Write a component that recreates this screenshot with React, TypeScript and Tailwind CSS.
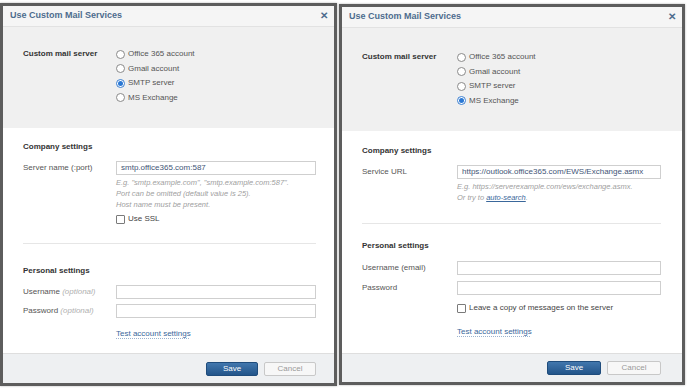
import React from "react";

const font = { fontFamily: '"Liberation Sans", Arial, sans-serif' };

function Radio({ label, checked }: { label: string; checked?: boolean }) {
  return (
    <div className="flex h-[14.5px] items-center">
      <span
        className={`flex h-[9px] w-[9px] items-center justify-center rounded-full border bg-white ${
          checked ? "border-[#3b7fd0]" : "border-[#8a8a8a]"
        }`}
      >
        {checked && <span className="h-[5px] w-[5px] rounded-full bg-[#2a78d4]" />}
      </span>
      <span className="ml-[3px] text-[8px] text-[#555]">{label}</span>
    </div>
  );
}

function Checkbox({ label }: { label: string }) {
  return (
    <div className="flex h-[12px] items-center">
      <span className="h-[9px] w-[9px] rounded-[1px] border border-[#7a7a7a] bg-white" />
      <span className="ml-[3px] text-[8px] text-[#444]">{label}</span>
    </div>
  );
}

function Input({ value }: { value?: string }) {
  return (
    <div className="flex h-[14px] flex-1 items-center border border-[#cfcfcf] bg-white px-[4px] text-[8px] text-[#3f5576]">
      {value}
    </div>
  );
}

function TitleBar() {
  return (
    <div className="flex h-[21px] items-center justify-between border-b border-[#e2e2e2] bg-[#f5f5f5] pl-[7px] pr-[6px]">
      <span className="text-[9px] font-bold text-[#4d6c8e]">Use Custom Mail Services</span>
      <span className="text-[10px] font-bold leading-none text-[#4d6c8e]">✕</span>
    </div>
  );
}

function ServerChoice({ selected, labelWidth, pt, height }: { selected: number; labelWidth: string; pt: string; height: string }) {
  const options = ["Office 365 account", "Gmail account", "SMTP server", "MS Exchange"];
  return (
    <div className={`flex bg-[#f0f0f0] pl-[20px] ${pt} ${height}`}>
      <div className={`${labelWidth} h-[14.5px] flex items-center text-[8px] font-bold text-[#333]`}>
        Custom mail server
      </div>
      <div className="flex flex-col">
        {options.map((o, i) => (
          <Radio key={o} label={o} checked={i === selected} />
        ))}
      </div>
    </div>
  );
}

function Footer({ pr, height, saveW }: { pr: string; height: string; saveW: string }) {
  return (
    <div className={`flex items-center justify-end gap-[6px] border-t border-[#dedede] bg-[#eef0f2] ${pr} ${height}`}>
      <button
        className={`flex h-[14px] ${saveW} items-center justify-center rounded-[2px] border border-[#1f4c7c] bg-gradient-to-b from-[#4277ad] to-[#23558a] text-[8px] text-white`}
      >
        Save
      </button>
      <button
        className={`flex h-[14px] ${saveW} items-center justify-center rounded-[2px] border border-[#c8c8c8] bg-[#f7f7f7] text-[8px] text-[#9a9a9a]`}
      >
        Cancel
      </button>
    </div>
  );
}

const linkCls = "text-[8px] text-[#3a679b] underline decoration-dotted decoration-[#9bb3cf] underline-offset-2";

function SmtpDialog() {
  return (
    <div className="mt-[3px] flex h-[383px] w-[337px] flex-col border-[3px] border-[#5d5d5d] bg-white shadow-[0_0_2px_rgba(0,0,0,0.3)]">
      <TitleBar />
      <ServerChoice selected={2} labelWidth="w-[93px]" pt="pt-[20px]" height="h-[101px]" />
      <div className="flex h-[225px] flex-col pl-[20px] pr-[18px] pt-[13px]">
        <div className="h-[12px] text-[8px] font-bold leading-[12px] text-[#333]">Company settings</div>
        <div className="mt-[8px] flex items-center">
          <div className="w-[93px] text-[8px] text-[#555]">Server name (:port)</div>
          <Input value="smtp.office365.com:587" />
        </div>
        <div className="ml-[93px] mt-[2px] text-[7.5px] italic leading-[11px] text-[#a0a0a0]">
          <div>E.g. "smtp.example.com", "smtp.example.com:587".</div>
          <div>Port can be omitted (default value is 25).</div>
          <div>Host name must be present.</div>
        </div>
        <div className="ml-[93px] mt-[3px]">
          <Checkbox label="Use SSL" />
        </div>
        <div className="mt-[18px] h-px bg-[#e6e6e6]" />
        <div className="mt-[21px] h-[12px] text-[8px] font-bold leading-[12px] text-[#333]">Personal settings</div>
        <div className="mt-[8px] flex items-center">
          <div className="w-[93px] text-[8px] text-[#555]">
            Username <span className="italic text-[#b0b0b0]">(optional)</span>
          </div>
          <Input />
        </div>
        <div className="mt-[5px] flex items-center">
          <div className="w-[93px] text-[8px] text-[#555]">
            Password <span className="italic text-[#b0b0b0]">(optional)</span>
          </div>
          <Input />
        </div>
        <div className="ml-[93px] mt-[7px] h-[12px] leading-[12px]">
          <span className={linkCls}>Test account settings</span>
        </div>
      </div>
      <Footer pr="pr-[18px]" height="h-[30px]" saveW="w-[52px]" />
    </div>
  );
}

function ExchangeDialog() {
  return (
    <div className="ml-[2px] mt-[4px] flex h-[381px] w-[346px] flex-col border-[3px] border-[#5d5d5d] bg-white shadow-[0_0_2px_rgba(0,0,0,0.3)]">
      <TitleBar />
      <ServerChoice selected={3} labelWidth="w-[95px]" pt="pt-[22px]" height="h-[103px]" />
      <div className="flex h-[222px] flex-col pl-[20px] pr-[21px] pt-[14px]">
        <div className="h-[12px] text-[8px] font-bold leading-[12px] text-[#333]">Company settings</div>
        <div className="mt-[8px] flex items-center">
          <div className="w-[95px] text-[8px] text-[#555]">Service URL</div>
          <Input value="https://outlook.office365.com/EWS/Exchange.asmx" />
        </div>
        <div className="ml-[95px] mt-[2px] text-[7.5px] italic leading-[11px] text-[#a0a0a0]">
          <div>E.g. https://serverexample.com/ews/exchange.asmx.</div>
          <div>
            Or try to <span className="text-[#3a679b] underline">auto-search</span>.
          </div>
        </div>
        <div className="mt-[20px] h-px bg-[#e6e6e6]" />
        <div className="mt-[16px] h-[12px] text-[8px] font-bold leading-[12px] text-[#333]">Personal settings</div>
        <div className="mt-[9px] flex items-center">
          <div className="w-[95px] text-[8px] text-[#555]">Username (email)</div>
          <Input />
        </div>
        <div className="mt-[6px] flex items-center">
          <div className="w-[95px] text-[8px] text-[#555]">Password</div>
          <Input />
        </div>
        <div className="ml-[95px] mt-[7px]">
          <Checkbox label="Leave a copy of messages on the server" />
        </div>
        <div className="ml-[95px] mt-[9px] h-[12px] leading-[12px]">
          <span className={linkCls}>Test account settings</span>
        </div>
      </div>
      <Footer pr="pr-[21px]" height="h-[29px]" saveW="w-[54px]" />
    </div>
  );
}

export default function App() {
  return (
    <div className="flex h-[389px] w-[688px] items-start bg-white" style={font}>
      <SmtpDialog />
      <ExchangeDialog />
    </div>
  );
}
